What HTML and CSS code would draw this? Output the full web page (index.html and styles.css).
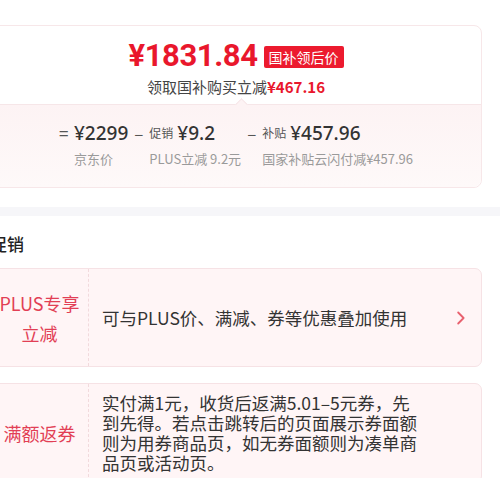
FILE: index.html
```html
<!DOCTYPE html>
<html lang="zh-CN">
<head>
<meta charset="utf-8">
<link rel="stylesheet" href="styles.css">
</head>
<body>
<div class="page">
  <div class="price-card">
    <div class="price-top">
      <div class="price-line">
        <span class="price">¥1831.84</span>
        <span class="badge">国补领后价</span>
      </div>
      <div class="price-sub">领取国补购买立减<span class="sub-amt">¥467.16</span></div>
    </div>
    <div class="price-calc">
      <div class="calc-col">
        <span class="op">=</span>
        <span class="val">¥2299</span>
        <span class="lbl">京东价</span>
      </div>
      <div class="calc-col">
        <span class="op">–</span>
        <span class="val"><span class="tag">促销</span>¥9.2</span>
        <span class="lbl">PLUS立减 9.2元</span>
      </div>
      <div class="calc-col">
        <span class="op">–</span>
        <span class="val"><span class="tag">补贴</span>¥457.96</span>
        <span class="lbl">国家补贴云闪付减¥457.96</span>
      </div>
    </div>
  </div>

  <div class="band"></div>

  <div class="promo">
    <div class="promo-title">促销</div>
    <div class="promo-card promo-card-one">
      <div class="promo-left promo-left-two">PLUS专享<br>立减</div>
      <div class="promo-text">可与PLUS价、满减、券等优惠叠加使用</div>
      <div class="promo-arrow">
        <svg width="8" height="14" viewBox="0 0 8 14"><polyline points="1.2,1.5 6.6,7 1.2,12.5" fill="none" stroke="#e8606e" stroke-width="1.8" stroke-linecap="round" stroke-linejoin="round"/></svg>
      </div>
    </div>
    <div class="promo-card promo-card-two">
      <div class="promo-left">满额返券</div>
      <div class="promo-text promo-text-long">实付满1元，收货后返满5.01–5元券，先到先得。若点击跳转后的页面展示券面额则为用券商品页，如无券面额则为凑单商品页或活动页。</div>
      <div class="promo-arrow"></div>
    </div>
  </div>
</div>
</body>
</html>
```
FILE: styles.css
```css
* { box-sizing: border-box; }
html, body {
  margin: 0;
  padding: 0;
  background: #fff;
  overflow: hidden;
  width: 500px;
  height: 478px;
}
body {
  font-family: "Noto Sans CJK SC", "Noto Sans", sans-serif;
  color: #333;
}
.page {
  margin-left: -10px;
  width: 510px;
  padding-top: 25px;
}
.price-card {
  width: 492px;
  border: 1px solid #f7e7e9;
  border-radius: 8px;
  background: #fff;
}
.price-top {
  padding: 12px 0 7px;
  display: flex;
  flex-direction: column;
  align-items: center;
  border-bottom: 1px solid #f6e6e8;
}
.price-line {
  display: flex;
  align-items: center;
  height: 36px;
}
.price {
  font-family: Roboto, "Liberation Sans", sans-serif;
  font-weight: 700;
  font-size: 31px;
  line-height: 36px;
  color: #e9172c;
  letter-spacing: -0.4px;
}
.badge {
  margin-left: 6px;
  height: 22px;
  line-height: 22px;
  padding: 0 5px;
  background: #ec1a2e;
  color: #fff;
  font-size: 14px;
  border-radius: 2px;
  margin-top: 2px;
}
.price-sub {
  margin-top: 3px;
  font-size: 15px;
  line-height: 20px;
  color: #444;
}
.sub-amt {
  color: #e9172c;
  font-weight: 700;
}
.price-calc {
  position: relative;
  display: flex;
  justify-content: center;
  gap: 6px;
  padding: 15px 0 19px;
  background: linear-gradient(180deg, #fdf3f4 0%, #fef9f9 100%);
  border-radius: 0 0 8px 8px;
}
.price-calc::before {
  content: "";
  position: absolute;
  left: 246px;
  top: -5px;
  width: 8px;
  height: 8px;
  background: #fdf3f4;
  border-top: 1px solid #f6e6e8;
  border-left: 1px solid #f6e6e8;
  transform: rotate(45deg);
}
.calc-col {
  display: grid;
  grid-template-columns: 15px auto;
  grid-template-rows: 26px 18px;
  row-gap: 4px;
}
.op {
  grid-column: 1;
  grid-row: 1;
  font-size: 17px;
  line-height: 26px;
  color: #555;
}
.val {
  grid-column: 2;
  grid-row: 1;
  font-family: "Noto Sans", "Noto Sans CJK SC", sans-serif;
  font-size: 19px;
  line-height: 26px;
  font-weight: 500;
  color: #333;
  white-space: nowrap;
}
.tag {
  font-family: "Noto Sans CJK SC", sans-serif;
  font-size: 12px;
  font-weight: 400;
  color: #555;
  margin-right: 4px;
  vertical-align: 2px;
}
.lbl {
  grid-column: 2;
  grid-row: 2;
  font-size: 13px;
  line-height: 18px;
  color: #9a9a9a;
  white-space: nowrap;
}
.band {
  height: 9px;
  margin-top: 19px;
  background: #f6f6f9;
}
.promo {
  width: 492px;
  padding-top: 16px;
}
.promo-title {
  font-size: 17px;
  line-height: 24px;
  font-weight: 500;
  color: #222;
  margin-bottom: 12px;
}
.promo-card {
  display: grid;
  grid-template-columns: 98px 1fr auto;
  background: #fff5f6;
  border: 1px solid #f6e2e5;
  border-radius: 7px;
  margin-bottom: 16px;
}
.promo-card-one {
  min-height: 99px;
}
.promo-left {
  border-right: 1px dashed #f2dadd;
  display: flex;
  align-items: center;
  justify-content: center;
  text-align: center;
  font-size: 18px;
  line-height: 24px;
  color: #e23f55;
}
.promo-left-two {
  line-height: 30px;
}
.promo-text {
  padding-left: 13px;
  display: flex;
  align-items: center;
  font-size: 17.5px;
  line-height: 20px;
  color: #333;
}
.promo-text-long {
  display: block;
  width: 335px;
  padding: 9px 0 9px 13px;
}
.promo-arrow {
  display: flex;
  align-items: center;
  padding-right: 16px;
}
```
